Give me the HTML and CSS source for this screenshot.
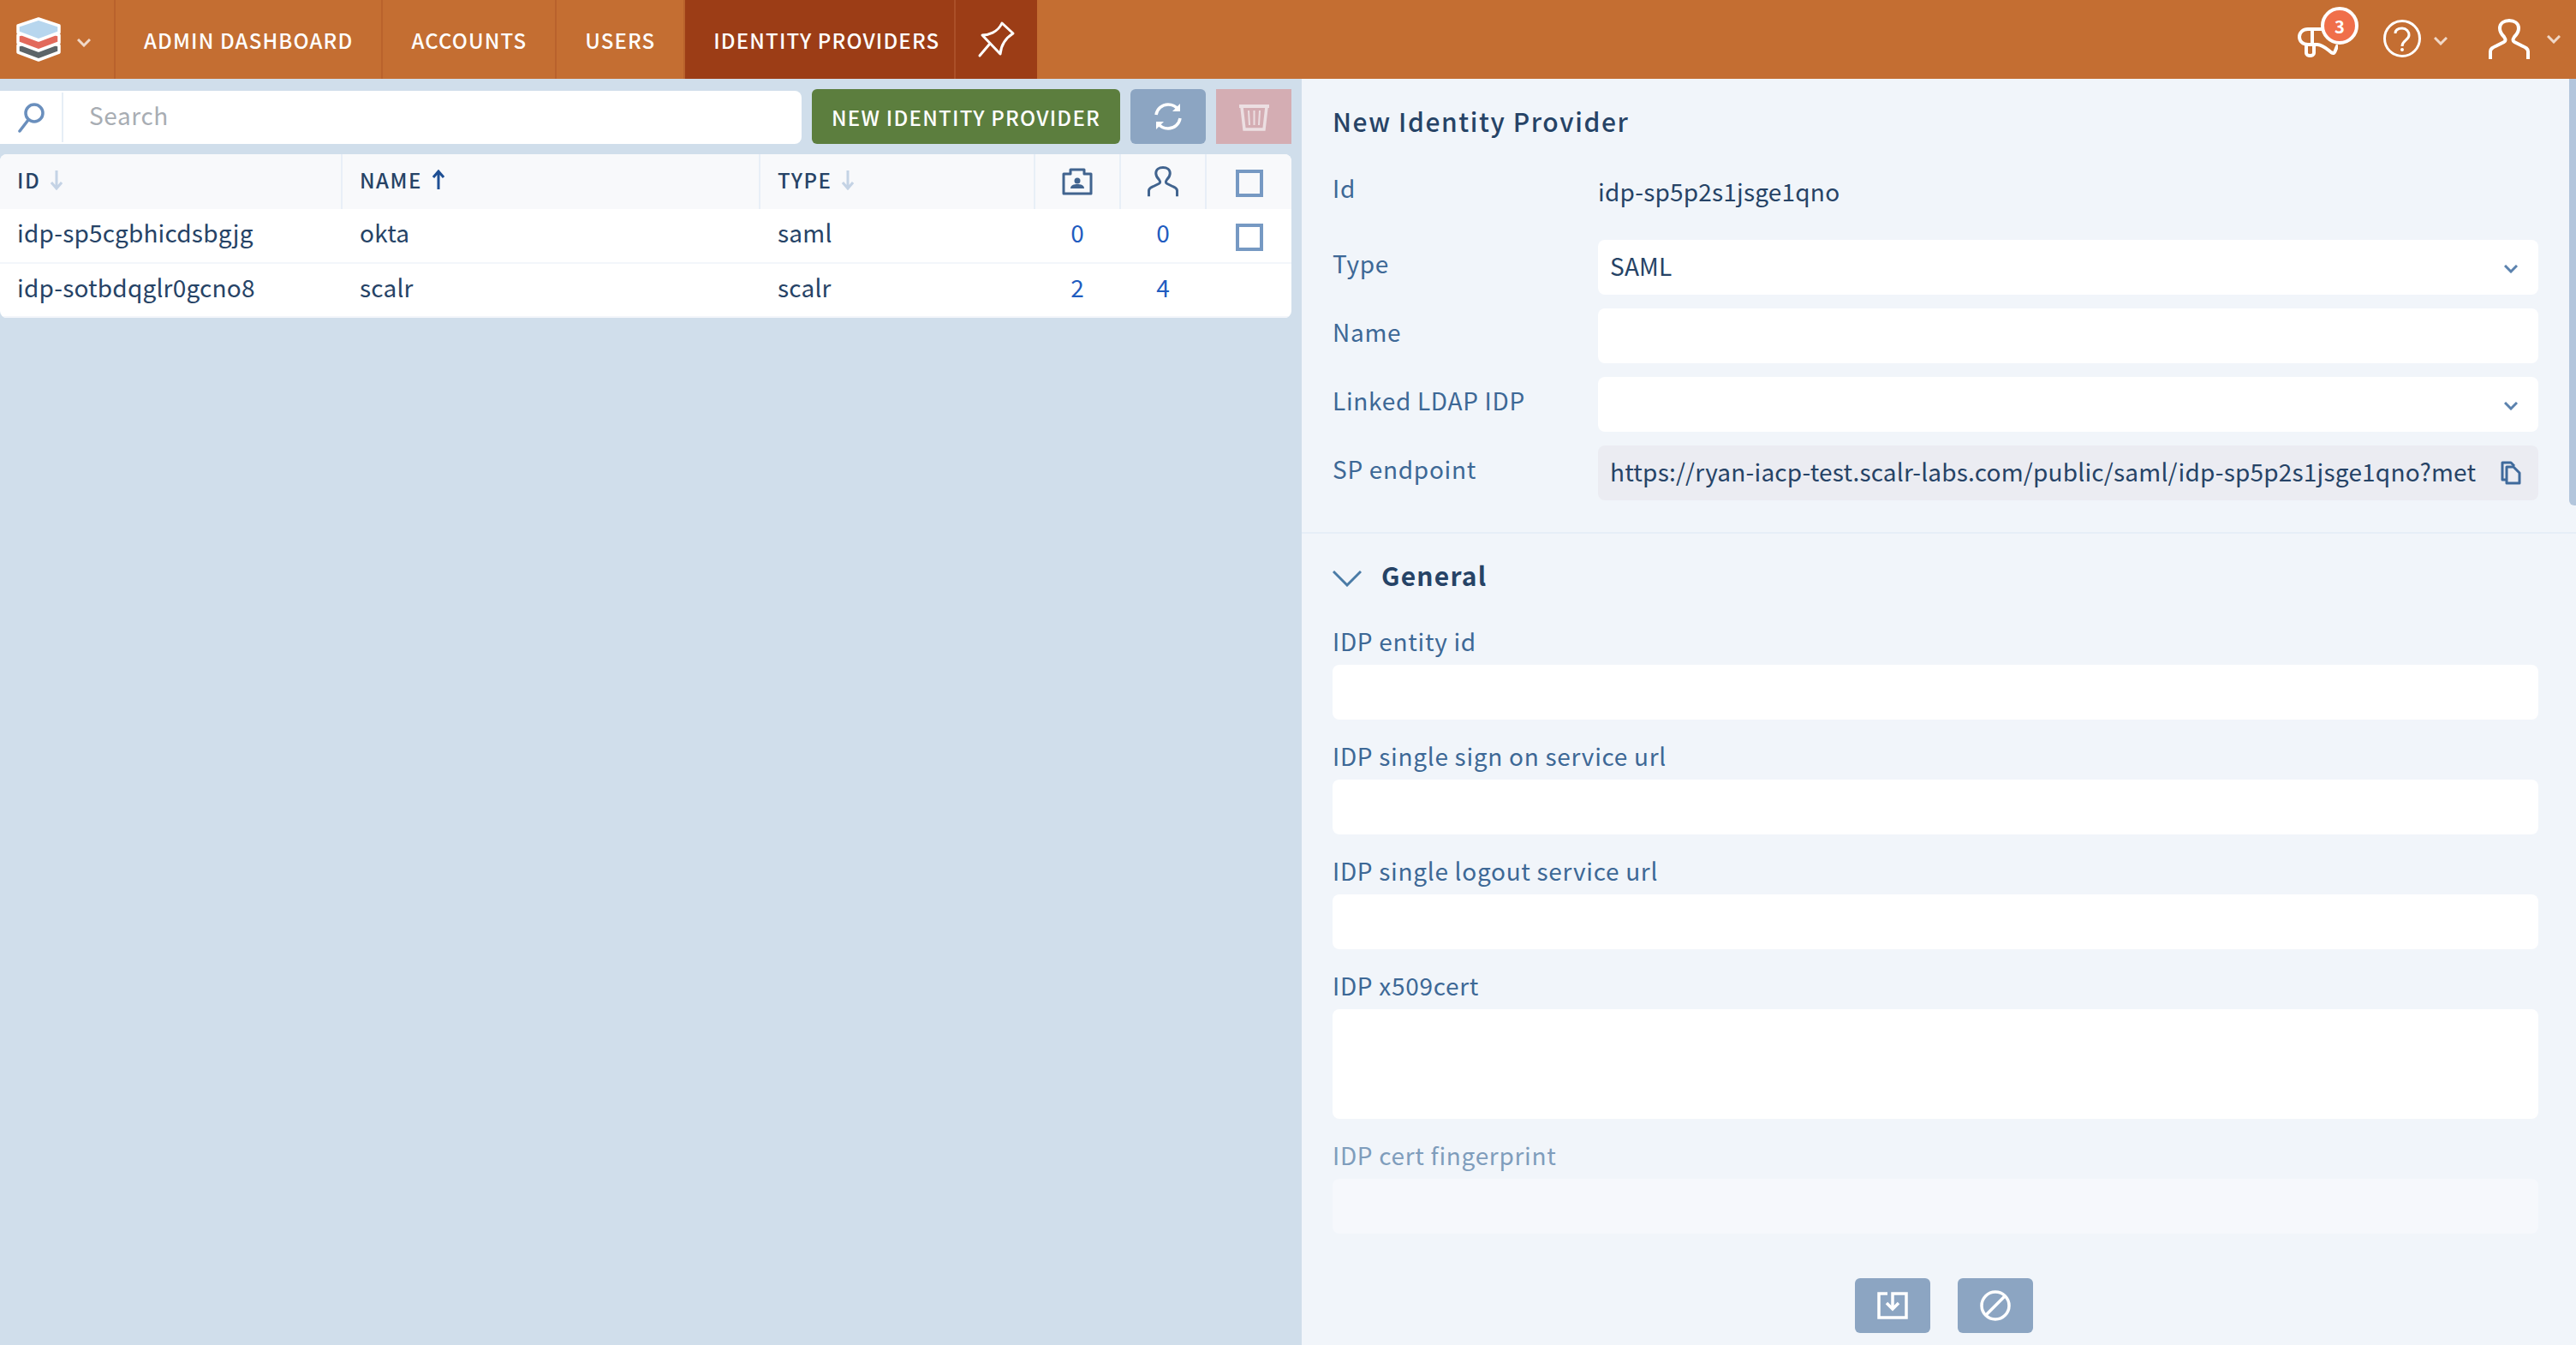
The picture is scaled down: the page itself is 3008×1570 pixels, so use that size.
FILE: index.html
```html
<!DOCTYPE html>
<html lang="en">
<head>
  <meta charset="UTF-8" />
  <title>Identity Providers</title>
  <link rel="stylesheet" href="styles.css">
</head>
<body>

<!-- Top bar -->
<header class="topbar">
  <div class="logoCell">
    <svg class="logo" width="54" height="54" viewBox="0 0 54 54" stroke="#fff" stroke-width="3.5" stroke-linejoin="round">
      <path d="M27 26 L51 34 V42 L27 51 L3 42 V34 Z" fill="#5c6468"/>
      <path d="M27 14 L51 22 V31 L27 40 L3 31 V22 Z" fill="#e2695b"/>
      <path d="M27 3 L51 11 V19 L27 28 L3 19 V11 Z" fill="#b7d6ee"/>
    </svg>
    <svg class="chev faint logoChev" width="16" height="10" viewBox="0 0 16 10"><path d="M1 1 L8 8 L15 1"/></svg>
  </div>
  <a class="navItem">ADMIN DASHBOARD</a>
  <a class="navItem">ACCOUNTS</a>
  <a class="navItem">USERS</a>
  <a class="navItem active">IDENTITY PROVIDERS</a>
  <a class="pinCell active">
    <svg width="48" height="48" viewBox="0 0 48 48" fill="none" stroke="#fff" stroke-width="3" stroke-linejoin="round" stroke-linecap="round">
      <path d="M7 19 C14 19 25 16 30 5 L43 17 C35 22 29 30 28 41 Z"/>
      <path d="M15 30 L4 43"/>
    </svg>
  </a>
  <div class="topRight">
    <div class="bell">
      <svg width="48" height="36" viewBox="0 0 48 36" fill="none" stroke="#fff" stroke-width="4" stroke-linejoin="round" stroke-linecap="round">
        <path d="M30 2 H13 C7 2 3 6 3 11 C3 16 7 20 13 20 H24 C30 20 36 26 40 29 C43 31 44 30 45 27 L47 22"/>
        <path d="M18 2 V20"/>
        <path d="M11 20 V30 C11 34 20 34 20 30 V20"/>
      </svg>
      <span class="badge">3</span>
    </div>
    <svg class="help" width="44" height="44" viewBox="0 0 44 44" fill="none" stroke="#fff" stroke-width="3">
      <circle cx="22" cy="22" r="20.5"/>
      <path d="M14 16 C14 12 17 10 22 10 C27 10 30 14 30 18 C30 24 22 24 22 31"/>
      <circle cx="22" cy="35" r="1" fill="#fff" stroke-width="2"/>
    </svg>
    <svg class="chev faint helpChev" width="16" height="10" viewBox="0 0 16 10"><path d="M1 1 L8 8 L15 1"/></svg>
    <svg class="user" width="48" height="48" viewBox="0 0 48 48" fill="none" stroke="#fff" stroke-width="4">
      <path d="M2 47 V38 C2 34 6 33 10 31 L18 27 C20 26 20 24 18 21 C15 18 13 15 13 11 C13 5 18 2 24 2 C30 2 35 5 35 11 C35 15 33 18 30 21 C28 24 28 26 30 27 L38 31 C42 33 46 34 46 38 V47"/>
    </svg>
    <svg class="chev faint" width="16" height="10" viewBox="0 0 16 10"><path d="M1 1 L8 8 L15 1"/></svg>
  </div>
</header>

<main class="content">

  <!-- List side -->
  <section class="listPane">
    <div class="toolbar">
      <div class="searchBox">
        <div class="searchIcon">
          <svg width="32" height="36" viewBox="0 0 32 36" fill="none" stroke="#6a8fbd" stroke-width="3.5">
            <circle cx="20" cy="13" r="10"/>
            <path d="M13 21 L3 34" stroke-linecap="round"/>
          </svg>
        </div>
        <span class="placeholder">Search</span>
      </div>
      <button class="btn btnGreen">NEW IDENTITY PROVIDER</button>
      <button class="btn btnIcon">
        <svg width="34" height="34" viewBox="0 0 34 34" fill="none" stroke="#fff" stroke-width="3.5">
          <path d="M3 15 C4 8 10 3 17 3 C22 3 26 5 29 9"/>
          <path d="M31 19 C30 26 24 31 17 31 C12 31 8 29 5 25"/>
          <path d="M31 2 V11 H22 Z" fill="#fff" stroke="none"/>
          <path d="M3 32 V23 H12 Z" fill="#fff" stroke="none"/>
        </svg>
      </button>
      <button class="btn btnDelete">
        <svg width="37" height="34" viewBox="0 0 37 34" fill="none" stroke="#ecdfe2" stroke-width="3.5">
          <path d="M1 3 H36 V7 H1 Z" fill="#ecdfe2" stroke="none"/>
          <path d="M4 6 L7 32 H30 L33 6"/>
          <path d="M12 10 L13 27 M18.5 10 V27 M25 10 L24 27" stroke-width="2"/>
        </svg>
      </button>
    </div>

    <div class="table">
      <div class="row headRow">
        <div class="cell colId"><span class="headText">ID</span> <svg class="sort" width="14" height="24" viewBox="0 0 14 24"><path d="M7 1 V22 M1 15 L7 22 L13 15"/></svg></div>
        <div class="cell colName"><span class="headText">NAME</span> <svg class="sort on" width="14" height="24" viewBox="0 0 14 24"><path d="M7 23 V2 M1 9 L7 2 L13 9"/></svg></div>
        <div class="cell colType"><span class="headText">TYPE</span> <svg class="sort" width="14" height="24" viewBox="0 0 14 24"><path d="M7 1 V22 M1 15 L7 22 L13 15"/></svg></div>
        <div class="cell colNum">
          <svg width="36" height="32" viewBox="0 0 36 32" fill="none" stroke="#41648f" stroke-width="3">
            <path d="M2 7 H10 V2 H26 V7 H34 V30 H2 Z" stroke-linejoin="round"/>
            <circle cx="18" cy="15" r="3.5" fill="#41648f" stroke="none"/>
            <path d="M10 24 C10 20 14 19 18 19 C22 19 26 20 26 24 Z" fill="#41648f" stroke="none"/>
          </svg>
        </div>
        <div class="cell colNum">
          <svg width="36" height="36" viewBox="0 0 48 48" fill="none" stroke="#41648f" stroke-width="4">
            <path d="M2 47 V38 C2 34 6 33 10 31 L18 27 C20 26 20 24 18 21 C15 18 13 15 13 11 C13 5 18 2 24 2 C30 2 35 5 35 11 C35 15 33 18 30 21 C28 24 28 26 30 27 L38 31 C42 33 46 34 46 38 V47"/>
          </svg>
        </div>
        <div class="cell colCheck"><span class="checkbox"></span></div>
      </div>
      <div class="row dataRow">
        <div class="cell colId"><span class="dataText">idp-sp5cgbhicdsbgjg</span></div>
        <div class="cell colName"><span class="dataText">okta</span></div>
        <div class="cell colType"><span class="dataText">saml</span></div>
        <div class="cell colNum link"><span class="dataText">0</span></div>
        <div class="cell colNum link"><span class="dataText">0</span></div>
        <div class="cell colCheck"><span class="checkbox"></span></div>
      </div>
      <div class="row dataRow">
        <div class="cell colId"><span class="dataText">idp-sotbdqglr0gcno8</span></div>
        <div class="cell colName"><span class="dataText">scalr</span></div>
        <div class="cell colType"><span class="dataText">scalr</span></div>
        <div class="cell colNum link"><span class="dataText">2</span></div>
        <div class="cell colNum link"><span class="dataText">4</span></div>
        <div class="cell colCheck"></div>
      </div>
    </div>
  </section>

  <!-- Form side -->
  <section class="formPane">
    <div class="scrollThumb"></div>

    <div class="formTop">
      <h2 class="formTitle">New Identity Provider</h2>
      <div class="fieldRow idRow">
        <label>Id</label>
        <span class="plainValue">idp-sp5p2s1jsge1qno</span>
      </div>
      <div class="fieldRow">
        <label>Type</label>
        <div class="input select"><span class="inputText">SAML</span><span class="selectArrow"><svg class="chev blue" width="16" height="10" viewBox="0 0 16 10"><path d="M1 1 L8 8 L15 1"/></svg></span></div>
      </div>
      <div class="fieldRow">
        <label>Name</label>
        <div class="input"></div>
      </div>
      <div class="fieldRow">
        <label>Linked LDAP IDP</label>
        <div class="input select"><span></span><span class="selectArrow"><svg class="chev blue" width="16" height="10" viewBox="0 0 16 10"><path d="M1 1 L8 8 L15 1"/></svg></span></div>
      </div>
      <div class="fieldRow">
        <label>SP endpoint</label>
        <div class="input readonly">
          <span class="inputText endpoint">https://ryan-iacp-test.scalr-labs.com/public/saml/idp-sp5p2s1jsge1qno?met</span>
          <svg class="copy" width="24" height="28" viewBox="0 0 24 28" fill="none" stroke="#3f6a9c" stroke-width="3" stroke-linejoin="round">
            <path d="M6 22 H2 V2 H12 L16 6"/>
            <path d="M7 7 H15 L22 14 V26 H7 Z"/>
          </svg>
        </div>
      </div>
    </div>

    <div class="formSection">
      <h3 class="sectionTitle">
        <svg width="34" height="20" viewBox="0 0 34 20" fill="none" stroke="#4a7ba6" stroke-width="3"><path d="M1 2 L17 18 L33 2"/></svg>
        General
      </h3>
      <div class="stackField">
        <label>IDP entity id</label>
        <div class="input"></div>
      </div>
      <div class="stackField">
        <label>IDP single sign on service url</label>
        <div class="input"></div>
      </div>
      <div class="stackField">
        <label>IDP single logout service url</label>
        <div class="input"></div>
      </div>
      <div class="stackField">
        <label>IDP x509cert</label>
        <div class="input tall"></div>
      </div>
      <div class="stackField muted">
        <label>IDP cert fingerprint</label>
        <div class="input"></div>
      </div>
    </div>

    <div class="formActions">
      <button class="btn btnIcon">
        <svg width="36" height="32" viewBox="0 0 36 32" fill="none" stroke="#fff" stroke-width="3.5">
          <path d="M12 2 H2 V30 H34 V2 H18 V20"/>
          <path d="M11 13 L18 20 L25 13"/>
        </svg>
      </button>
      <button class="btn btnIcon">
        <svg width="36" height="36" viewBox="0 0 36 36" fill="none" stroke="#fff" stroke-width="3.5">
          <circle cx="18" cy="18" r="16"/>
          <path d="M6.5 29.5 L29.5 6.5"/>
        </svg>
      </button>
    </div>
  </section>
</main>

</body>
</html>
```

FILE: styles.css
```css
* { margin: 0; padding: 0; box-sizing: border-box; }

body {
  font-family: "Noto Sans CJK JP", "Noto Sans", sans-serif;
  font-size: 28px;
  color: #264366;
  background: #d0deeb;
  width: 3008px;
  height: 1570px;
  overflow: hidden;
  letter-spacing: 0.2px;
}

/* Top bar */
.topbar {
  height: 92px;
  background: #c46e32;
  display: flex;
  color: #fff;
}

.logoCell {
  width: 135px;
  display: flex;
  align-items: center;
  gap: 18px;
  padding-left: 18px;
  border-right: 2px solid #b9622c;
}

.chev { fill: none; stroke-width: 3; }
.chev.faint { stroke: #f0d8c8; }
.chev.blue { stroke: #5b82ae; }
.logoChev { margin-top: 8px; }

.navItem {
  display: flex;
  align-items: center;
  padding: 0 33px;
  font-size: 24px;
  font-weight: 500;
  letter-spacing: 1.15px;
  border-right: 2px solid #b9622c;
}

.navItem.active {
  background: #9c3d16;
  padding-right: 17px;
  border-right-color: #ab5028;
}

.pinCell {
  width: 95px;
  display: flex;
  align-items: center;
  justify-content: center;
}
.pinCell.active { background: #9c3d16; }

.topRight {
  margin-left: auto;
  display: flex;
  align-items: center;
  padding-right: 18px;
}

.bell { position: relative; width: 70px; height: 59px; margin: 0 29px 17px 0; }
.bell svg { position: absolute; left: -2px; bottom: -1px; }

.badge {
  position: absolute;
  right: 0;
  top: 0;
  width: 44px;
  height: 44px;
  border-radius: 50%;
  background: #f06f4a;
  border: 4px solid #fff;
  font-size: 20px;
  font-weight: 700;
  display: flex;
  align-items: center;
  justify-content: center;
}

.help { margin-bottom: 2px; }
.helpChev { margin: 4px 48px 0 15px; }
.user { margin-right: 20px; }

/* Main area */
.content {
  display: flex;
  height: 1478px;
}

.listPane {
  width: 1520px;
  padding: 12px 12px 0 0;
}

.toolbar {
  display: flex;
  align-items: flex-end;
  height: 64px;
  gap: 12px;
}

.searchBox {
  width: 936px;
  height: 62px;
  background: #fff;
  border-radius: 0 8px 8px 0;
  display: flex;
  align-items: center;
}

.searchIcon {
  width: 74px;
  height: 58px;
  display: flex;
  align-items: center;
  justify-content: center;
  border-right: 2px solid #e6eef6;
}

.placeholder {
  color: #a8adb3;
  margin-left: 30px;
  padding-bottom: 6px;
  letter-spacing: 0.6px;
}

.btn {
  height: 64px;
  border: none;
  border-radius: 6px;
  color: #fff;
  font-family: inherit;
  display: flex;
  align-items: center;
  justify-content: center;
}

.btnGreen {
  width: 360px;
  background: #5c7e3e;
  font-size: 24px;
  font-weight: 500;
  letter-spacing: 1.25px;
}

.btnIcon { width: 88px; background: #8ca5c2; }
.btnDelete { width: 88px; background: #d4adb3; border-radius: 0; }

/* Table */
.table {
  margin-top: 12px;
  background: #fff;
  border-radius: 8px;
  overflow: hidden;
}

.row { display: flex; }

.headRow {
  height: 64px;
  background: #f8f9fb;
  font-size: 24px;
  font-weight: 500;
  letter-spacing: 1.5px;
}

.headText { padding-bottom: 5px; }

.dataRow { height: 64px; border-bottom: 2px solid #f3f6fa; }
.dataRow:last-child { height: 63px; }

.dataText { padding-bottom: 8px; }

.cell {
  display: flex;
  align-items: center;
  padding-left: 20px;
  gap: 12px;
}

.colId { width: 400px; }
.colName { width: 488px; }
.colType { width: 321px; }
.colNum { width: 100px; padding-left: 0; justify-content: center; }
.colCheck { width: 99px; padding-left: 0; justify-content: center; }

.headRow .cell { border-right: 2px solid #e8eff7; }
.headRow .cell:last-child { border-right: none; }
.dataRow .colNum { padding-right: 2px; }

.sort { fill: none; stroke: #c4d3e5; stroke-width: 3; margin-bottom: 4px; }
.sort.on { stroke: #1e4f94; }

.link { color: #1f5cc0; }

.checkbox {
  width: 32px;
  height: 32px;
  margin-top: 3px;
  border: 4px solid #7699c3;
}

/* Form */
.formPane {
  position: relative;
  width: 1488px;
  background: #f1f5fa;
}

.scrollThumb {
  position: absolute;
  top: 0;
  right: 0;
  width: 8px;
  height: 498px;
  background: #b3c6dc;
  border-radius: 0 0 0 6px;
}

.formTop {
  padding: 0 44px 37px 36px;
  border-bottom: 2px solid #e6eef7;
}

.formTitle {
  font-size: 30px;
  font-weight: 500;
  letter-spacing: 1.6px;
  padding-top: 25px;
  line-height: 48px;
}

.fieldRow {
  display: flex;
  align-items: center;
  height: 64px;
  margin-top: 16px;
}

.fieldRow label {
  width: 310px;
  padding-bottom: 10px;
  color: #3d6896;
  letter-spacing: 0.7px;
}

.fieldRow.idRow { margin-top: 29px; height: 60px; margin-bottom: 26px; }
.plainValue { padding-bottom: 2px; }

.input {
  flex: 1;
  height: 64px;
  background: #fff;
  border-radius: 8px;
  display: flex;
  align-items: center;
}

.inputText { padding-bottom: 4px; }

.select { justify-content: space-between; padding-left: 14px; }

.selectArrow {
  width: 52px;
  height: 100%;
  padding: 4px 0 0 12px;
  display: flex;
  align-items: center;
  border-radius: 8px 0 0 8px;
}

.readonly {
  background: #ebecf2;
  padding-left: 14px;
  justify-content: space-between;
  padding-right: 20px;
}

.endpoint { white-space: nowrap; }

.formSection { padding: 19px 44px 0 36px; }

.sectionTitle {
  display: flex;
  align-items: center;
  gap: 23px;
  font-size: 30px;
  font-weight: 700;
  letter-spacing: 1.2px;
  line-height: 58px;
}

.sectionTitle svg { margin-top: 8px; }

.stackField { margin-bottom: 24px; }
.stackField label {
  display: block;
  color: #3d6896;
  line-height: 36px;
  padding-bottom: 10px;
  letter-spacing: 0.7px;
}
.sectionTitle + .stackField { margin-top: 30px; }
.stackField .input { height: 64px; }
.stackField .input.tall { height: 128px; }

.stackField.muted label { color: #7f9dbc; }
.stackField.muted .input { background: #f6f8fc; }

.formActions {
  position: absolute;
  left: 646px;
  top: 1400px;
  display: flex;
  gap: 32px;
}
```
